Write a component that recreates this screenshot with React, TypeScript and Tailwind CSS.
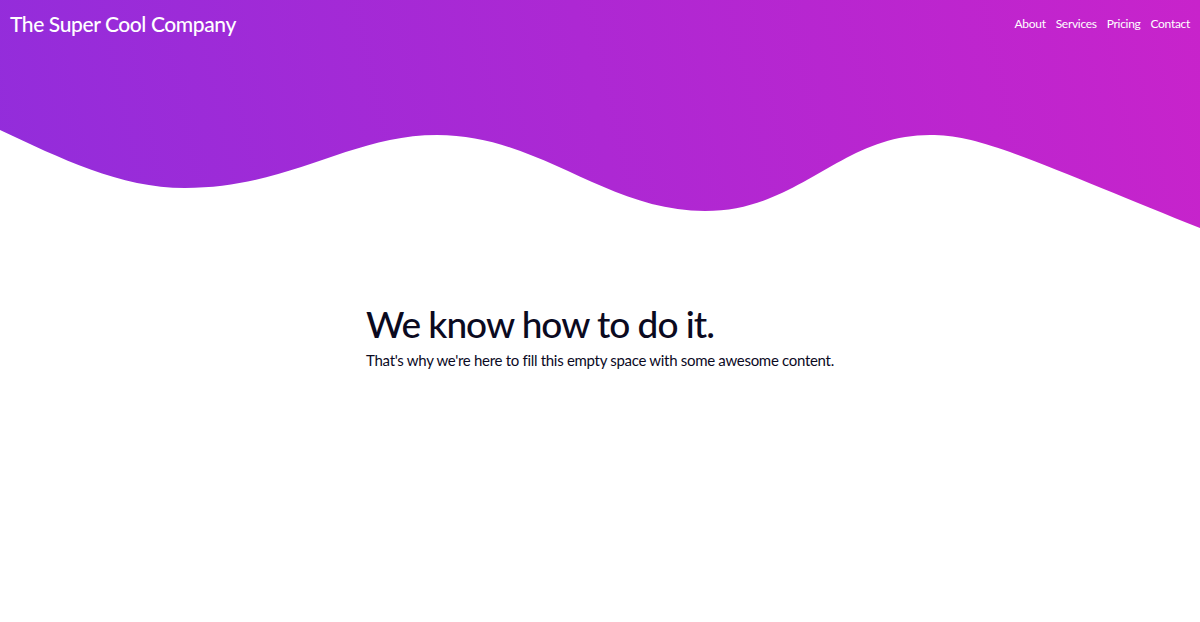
import React from "react";

export default function App() {
  return (
    <div className="relative w-full h-[622px] bg-white overflow-hidden" style={{ fontFamily: "Lato, 'Noto Sans', sans-serif" }}>
      <svg className="absolute left-0 top-0 w-full h-[230px]" viewBox="0 0 1200 230" preserveAspectRatio="none">
        <defs>
          <linearGradient id="g" gradientUnits="userSpaceOnUse" x1="0" y1="260" x2="1200" y2="0">
            <stop offset="0" stopColor="#922ddb" />
            <stop offset="1" stopColor="#c823cb" />
          </linearGradient>
        </defs>
        <path
          d="M0,0 H1200 V228 C1130,200 1060,170 1010,152 C975,140 955,135 930,135 C840,135 800,211 705,211 C605,211 540,135 437,135 C350,135 290,188 185,188 C120,188 60,158 0,130 Z"
          fill="url(#g)"
        />
      </svg>
      <header className="relative flex items-center justify-between h-[48px] pl-[10px] pr-[10px]">
        <div className="text-white text-[21px] font-medium tracking-[-0.4px]">The Super Cool Company</div>
        <nav className="flex gap-[10px] text-white text-[12px] tracking-[-0.3px]">
          <span>About</span>
          <span>Services</span>
          <span>Pricing</span>
          <span>Contact</span>
        </nav>
      </header>
      <main className="relative flex justify-center pt-[255px]">
        <div className="text-[#0b0a1f]">
          <h1 className="text-[37px] leading-[42px] font-medium tracking-[-1px]">We know how to do it.</h1>
          <p className="text-[15px] leading-[22px] mt-[4px] tracking-[-0.3px]">That's why we're here to fill this empty space with some awesome content.</p>
        </div>
      </main>
    </div>
  );
}
